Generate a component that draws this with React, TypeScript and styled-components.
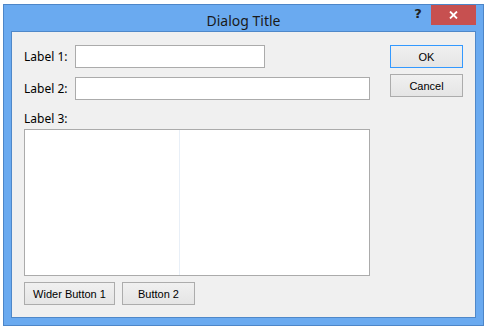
import React from 'react';
import styled, { createGlobalStyle } from 'styled-components';

const GlobalStyle = createGlobalStyle`
  html, body {
    margin: 0;
    padding: 0;
    background: #ffffff;
  }
  body {
    font-family: "Noto Sans", "Open Sans", sans-serif;
    font-size: 12px;
    color: #000000;
  }
`;

const Page = styled.div`
  padding: 4px 0 0 3px;
`;

const Window = styled.div`
  box-sizing: border-box;
  width: 481px;
  height: 322px;
  border: 1px solid #4d86c8;
  background: #6aaaf0;
  display: flex;
  flex-direction: column;
  padding: 0 7px 7px 7px;
`;

const TitleBar = styled.div`
  height: 28px;
  display: grid;
  grid-template-columns: 1fr auto 1fr;
  align-items: start;
`;

const Title = styled.div`
  grid-column: 2;
  font-size: 14px;
  line-height: 20px;
  padding-top: 6px;
  color: #1a1a1a;
`;

const Controls = styled.div`
  grid-column: 3;
  justify-self: end;
  display: flex;
  align-items: flex-start;
`;

const HelpButton = styled.div`
  width: 26px;
  height: 20px;
  font-family: "DejaVu Sans", sans-serif;
  font-weight: bold;
  font-size: 13px;
  line-height: 18px;
  text-align: center;
  color: #202020;
`;

const CloseButton = styled.div`
  width: 45px;
  height: 20px;
  background: #c75050;
  display: flex;
  align-items: center;
  justify-content: center;
`;

const Client = styled.div`
  flex: 1;
  border: 1px solid #4f88c9;
  background: #f0f0f0;
  padding: 13px 12px 12px 12px;
  display: flex;
  gap: 20px;
`;

const FormColumn = styled.div`
  width: 346px;
  display: flex;
  flex-direction: column;
`;

const FieldRow = styled.div`
  display: flex;
  align-items: center;
  margin-bottom: 9px;
`;

const Label = styled.label`
  width: 51px;
  line-height: 16px;
`;

const Input = styled.input<{ $width: number }>`
  box-sizing: border-box;
  width: ${(p) => p.$width}px;
  height: 23px;
  border: 1px solid #ababab;
  background: #ffffff;
  margin: 0;
  padding: 0 3px;
  font: inherit;
  outline: none;
`;

const ListLabel = styled.label`
  line-height: 16px;
  margin-top: 2px;
  margin-bottom: 2px;
`;

const ListBox = styled.div`
  box-sizing: border-box;
  width: 346px;
  height: 147px;
  border: 1px solid #ababab;
  background: #ffffff;
  display: flex;
`;

const ListColumn = styled.div`
  width: 154px;
  border-right: 1px solid #e8eff7;
`;

const ButtonRow = styled.div`
  display: flex;
  gap: 7px;
  margin-top: 6px;
`;

const Button = styled.button<{ $width: number; $default?: boolean }>`
  box-sizing: border-box;
  width: ${(p) => p.$width}px;
  height: 23px;
  margin: 0;
  padding: 0;
  border: 1px solid ${(p) => (p.$default ? '#3399ff' : '#acacac')};
  background: linear-gradient(#f0f0f0, #e5e5e5);
  font-family: "Liberation Sans", Arial, sans-serif;
  font-size: 11px;
  color: #000000;
`;

const SideColumn = styled.div`
  display: flex;
  flex-direction: column;
  gap: 6px;
`;

export default function App() {
  return (
    <Page>
      <GlobalStyle />
      <Window>
        <TitleBar>
          <Title>Dialog Title</Title>
          <Controls>
            <HelpButton>?</HelpButton>
            <CloseButton>
              <svg width="9" height="8" viewBox="0 0 9 8">
                <path d="M1 0.5 L8 7.5 M8 0.5 L1 7.5" stroke="#ffffff" strokeWidth="1.8" />
              </svg>
            </CloseButton>
          </Controls>
        </TitleBar>
        <Client>
          <FormColumn>
            <FieldRow>
              <Label>Label 1:</Label>
              <Input $width={190} />
            </FieldRow>
            <FieldRow>
              <Label>Label 2:</Label>
              <Input $width={295} />
            </FieldRow>
            <ListLabel>Label 3:</ListLabel>
            <ListBox>
              <ListColumn />
            </ListBox>
            <ButtonRow>
              <Button $width={91}>Wider Button 1</Button>
              <Button $width={73}>Button 2</Button>
            </ButtonRow>
          </FormColumn>
          <SideColumn>
            <Button $width={73} $default>OK</Button>
            <Button $width={73}>Cancel</Button>
          </SideColumn>
        </Client>
      </Window>
    </Page>
  );
}
